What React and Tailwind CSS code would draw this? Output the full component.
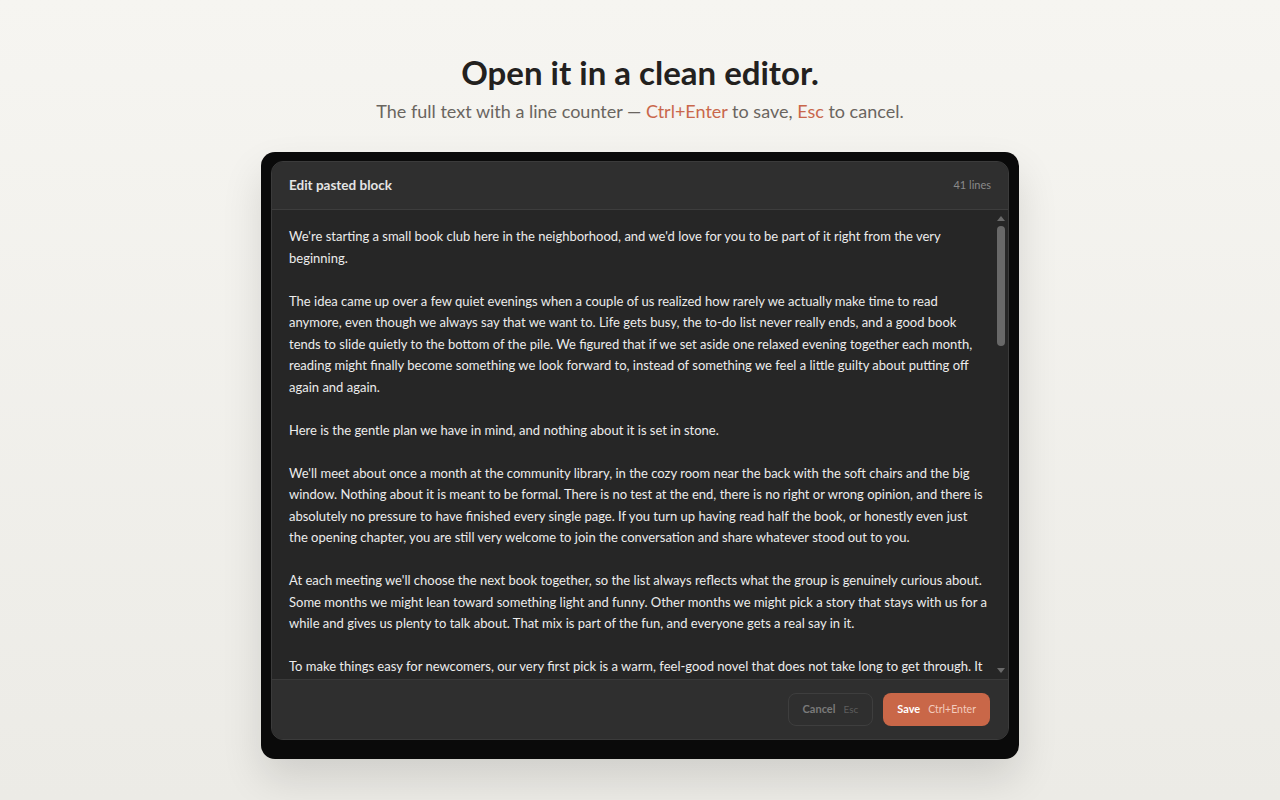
import React, { useState } from "react";

const initialText = `We're starting a small book club here in the neighborhood, and we'd love for you to be part of it right from the very beginning.

The idea came up over a few quiet evenings when a couple of us realized how rarely we actually make time to read anymore, even though we always say that we want to. Life gets busy, the to-do list never really ends, and a good book tends to slide quietly to the bottom of the pile. We figured that if we set aside one relaxed evening together each month, reading might finally become something we look forward to, instead of something we feel a little guilty about putting off again and again.

Here is the gentle plan we have in mind, and nothing about it is set in stone.

We'll meet about once a month at the community library, in the cozy room near the back with the soft chairs and the big window. Nothing about it is meant to be formal. There is no test at the end, there is no right or wrong opinion, and there is absolutely no pressure to have finished every single page. If you turn up having read half the book, or honestly even just the opening chapter, you are still very welcome to join the conversation and share whatever stood out to you.

At each meeting we'll choose the next book together, so the list always reflects what the group is genuinely curious about. Some months we might lean toward something light and funny. Other months we might pick a story that stays with us for a while and gives us plenty to talk about. That mix is part of the fun, and everyone gets a real say in it.

To make things easy for newcomers, our very first pick is a warm, feel-good novel that does not take long to get through. It is the kind of book you can finish over a couple of weekends without rushing.

We'll bring tea, coffee and something sweet to share.

If you'd like to come along, just reply to this note or stop by the front desk of the library and add your name to the list.

We hope to see you there.`;

export default function App() {
  const [text, setText] = useState(initialText);
  const lineCount = 41;

  return (
    <div
      className="min-h-screen w-full bg-gradient-to-b from-[#f6f5f1] to-[#ecebe6] flex flex-col items-center"
      style={{ fontFamily: 'Lato, "Open Sans", sans-serif' }}
    >
      <h1 className="mt-[51px] text-[33px] leading-[42px] font-bold text-[#23211e]">
        Open it in a clean editor.
      </h1>
      <p className="mt-[5px] text-[18px] leading-[26px] text-[#6a655f]">
        The full text with a line counter —{" "}
        <span className="text-[#c9674b]">Ctrl+Enter</span> to save,{" "}
        <span className="text-[#c9674b]">Esc</span> to cancel.
      </p>

      {/* Frame */}
      <div className="mt-[28px] w-[758px] bg-[#0a0a0a] rounded-[14px] px-[10px] pt-[9px] pb-[19px] shadow-[0_20px_40px_rgba(0,0,0,0.12)]">
        <div className="h-[579px] flex flex-col rounded-[12px] border border-[#3b3b3b] overflow-hidden bg-[#262626]">
          <div className="h-[48px] shrink-0 flex items-center justify-between px-[17px] bg-[#2f2f2f] border-b border-[#3d3d3d]">
            <span className="text-[13.5px] font-bold text-[#e4e4e4]">Edit pasted block</span>
            <span className="text-[11px] text-[#8a8a8a]">{lineCount} lines</span>
          </div>
          <div className="relative flex-1 min-h-0 flex">
            <textarea
              value={text}
              onChange={(e) => setText(e.target.value)}
              spellCheck={false}
              className="flex-1 w-full h-full resize-none bg-[#262626] text-[#ececec] text-[13px] leading-[21.5px] pl-[17px] pr-[21px] pt-[16px] pb-[10px] outline-none overflow-y-scroll [scrollbar-width:none]"
              style={{ fontFamily: 'Lato, "Open Sans", sans-serif' }}
            />
            {/* scrollbar */}
            <div className="pointer-events-none absolute right-[3px] top-[6px] w-0 h-0 border-x-[4px] border-x-transparent border-b-[5px] border-b-[#6a6a6a]" />
            <div className="pointer-events-none absolute right-[3px] top-[16px] w-[8px] h-[120px] rounded-full bg-[#686868]" />
            <div className="pointer-events-none absolute right-[3px] bottom-[6px] w-0 h-0 border-x-[4px] border-x-transparent border-t-[5px] border-t-[#6a6a6a]" />
          </div>
          <div className="h-[60px] shrink-0 flex items-center justify-end gap-[10px] px-[18px] bg-[#2f2f2f] border-t border-[#3a3a3a]">
            <button className="h-[33px] px-[14px] flex items-center gap-[8px] rounded-[8px] border border-[#3e3e3e] text-[#7a7a7a]">
              <span className="text-[11px] font-bold">Cancel</span>
              <span className="text-[10px] text-[#5d5d5d]">Esc</span>
            </button>
            <button className="h-[33px] px-[14px] flex items-center gap-[8px] rounded-[8px] bg-[#c96748] text-white">
              <span className="text-[11px] font-bold">Save</span>
              <span className="text-[10.5px] text-[#f3cbbd]">Ctrl+Enter</span>
            </button>
          </div>
        </div>
      </div>
    </div>
  );
}
